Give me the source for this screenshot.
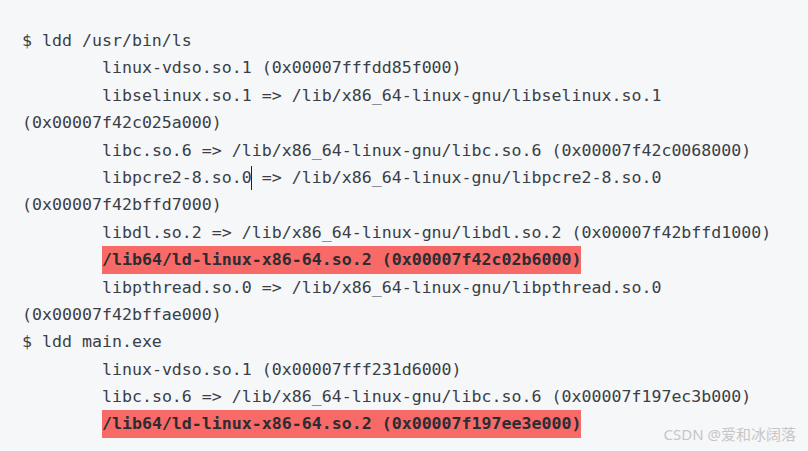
import React from "react";

const lines: { text: string; indent?: boolean; hl?: boolean; cursor?: boolean }[] = [
  { text: "$ ldd /usr/bin/ls" },
  { text: "linux-vdso.so.1 (0x00007fffdd85f000)", indent: true },
  { text: "libselinux.so.1 => /lib/x86_64-linux-gnu/libselinux.so.1", indent: true },
  { text: "(0x00007f42c025a000)" },
  { text: "libc.so.6 => /lib/x86_64-linux-gnu/libc.so.6 (0x00007f42c0068000)", indent: true },
  { text: "libpcre2-8.so.0", indent: true, cursor: true },
  { text: "(0x00007f42bffd7000)" },
  { text: "libdl.so.2 => /lib/x86_64-linux-gnu/libdl.so.2 (0x00007f42bffd1000)", indent: true },
  { text: "/lib64/ld-linux-x86-64.so.2 (0x00007f42c02b6000)", indent: true, hl: true },
  { text: "libpthread.so.0 => /lib/x86_64-linux-gnu/libpthread.so.0", indent: true },
  { text: "(0x00007f42bffae000)" },
  { text: "$ ldd main.exe" },
  { text: "linux-vdso.so.1 (0x00007fff231d6000)", indent: true },
  { text: "libc.so.6 => /lib/x86_64-linux-gnu/libc.so.6 (0x00007f197ec3b000)", indent: true },
  { text: "/lib64/ld-linux-x86-64.so.2 (0x00007f197ee3e000)", indent: true, hl: true },
];

export default function App() {
  return (
    <div className="relative w-[808px] h-[451px] bg-[#f6f7f9] overflow-hidden">
      <div
        className="pt-[27px] pl-[22px] text-[16.6px] leading-[27.4px] text-[#3a3e46] whitespace-pre"
        style={{ fontFamily: '"DejaVu Sans Mono", monospace' }}
      >
        {lines.map((l, i) => (
          <div key={i} className="h-[27.4px]">
            {l.indent ? "        " : ""}
            {l.hl ? (
              <span className="inline-block bg-[#f76a68] font-bold text-[#2a2d33] h-[27.4px]">{l.text}</span>
            ) : l.cursor ? (
              <>
                {l.text}
                <span className="inline-block w-px h-[24px] bg-[#222] align-middle -ml-px"></span>
                {" => /lib/x86_64-linux-gnu/libpcre2-8.so.0"}
              </>
            ) : (
              l.text
            )}
          </div>
        ))}
      </div>
      <div
        className="absolute right-[12px] bottom-[6px] text-[15px] text-[#c6c6c6]"
        style={{ fontFamily: '"Noto Sans", "Noto Sans CJK SC", sans-serif' }}
      >
        CSDN @爱和冰阔落
      </div>
    </div>
  );
}
